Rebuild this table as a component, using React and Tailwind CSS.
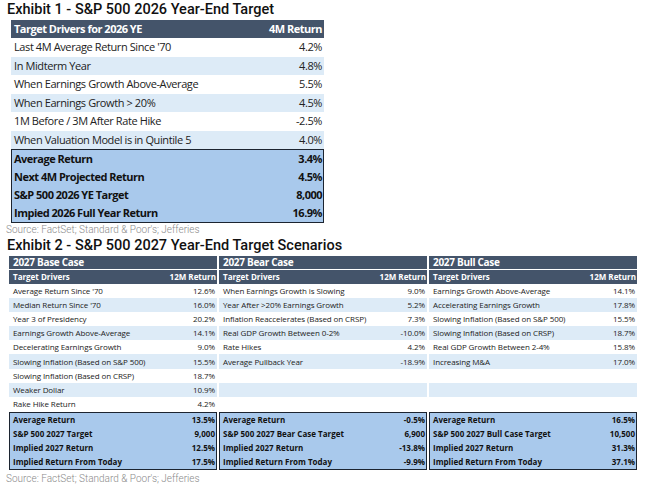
import React from 'react';

const ex1Rows = [
  ['Last 4M Average Return Since \'70', '4.2%'],
  ['In Midterm Year', '4.8%'],
  ['When Earnings Growth Above-Average', '5.5%'],
  ['When Earnings Growth > 20%', '4.5%'],
  ['1M Before / 3M After Rate Hike', '-2.5%'],
  ['When Valuation Model is in Quintile 5', '4.0%'],
];

const ex1Summary = [
  ['Average Return', '3.4%'],
  ['Next 4M Projected Return', '4.5%'],
  ['S&P 500 2026 YE Target', '8,000'],
  ['Impied 2026 Full Year Return', '16.9%'],
];

const scenarios = [
  {
    title: '2027 Base Case',
    rows: [
      ['Average Return Since \'70', '12.6%'],
      ['Median Return Since \'70', '16.0%'],
      ['Year 3 of Presidency', '20.2%'],
      ['Earnings Growth Above-Average', '14.1%'],
      ['Decelerating Earnings Growth', '9.0%'],
      ['Slowing Inflation (Based on S&P 500)', '15.5%'],
      ['Slowing Inflation (Based on CRSP)', '18.7%'],
      ['Weaker Dollar', '10.9%'],
      ['Rake Hike Return', '4.2%'],
    ],
    summary: [
      ['Average Return', '13.5%'],
      ['S&P 500 2027 Target', '9,000'],
      ['Implied 2027 Return', '12.5%'],
      ['Implied Return From Today', '17.5%'],
    ],
  },
  {
    title: '2027 Bear Case',
    rows: [
      ['When Earnings Growth is Slowing', '9.0%'],
      ['Year After >20% Earnings Growth', '5.2%'],
      ['Inflation Reaccelerates (Based on CRSP)', '7.3%'],
      ['Real GDP Growth Between 0-2%', '-10.0%'],
      ['Rate Hikes', '4.2%'],
      ['Average Pullback  Year', '-18.9%'],
      ['', ''],
      ['', ''],
      ['', ''],
    ],
    summary: [
      ['Average Return', '-0.5%'],
      ['S&P 500 2027 Bear Case Target', '6,900'],
      ['Implied 2027 Return', '-13.8%'],
      ['Implied Return From Today', '-9.9%'],
    ],
  },
  {
    title: '2027 Bull Case',
    rows: [
      ['Earnings Growth Above-Average', '14.1%'],
      ['Accelerating Earnings Growth', '17.8%'],
      ['Slowing Inflation (Based on S&P 500)', '15.5%'],
      ['Slowing Inflation (Based on CRSP)', '18.7%'],
      ['Real GDP Growth Between 2-4%', '15.8%'],
      ['Increasing M&A', '17.0%'],
      ['', ''],
      ['', ''],
      ['', ''],
    ],
    summary: [
      ['Average Return', '16.5%'],
      ['S&P 500 2027 Bull Case Target', '10,500'],
      ['Implied 2027 Return', '31.3%'],
      ['Implied Return From Today', '37.1%'],
    ],
  },
];

const cellFont = { fontFamily: '"Open Sans", "Noto Sans", sans-serif' };
const titleFont = { fontFamily: 'Roboto, sans-serif' };

// one of the three scenario blocks in exhibit 2
const ScenarioTable = ({ data }) => (
  <div className="w-[208px] flex flex-col">
    <div className="h-[13px] bg-[#44546a] text-white font-bold text-[10px] tracking-[-0.3px] leading-[13px] px-[4px]">{data.title}</div>
    <div className="h-px bg-white" />
    <div className="h-[14px] bg-[#44546a] text-white font-bold text-[8px] flex items-center justify-between pl-[4px] pr-[1px]">
      <span>Target Drivers</span>
      <span>12M Return</span>
    </div>
    {data.rows.map(([label, val], i) => (
      <div key={i} className={`h-[14.1px] flex items-center justify-between pl-[4px] pr-[2px] text-[8px] text-[#222] tracking-[-0.1px] ${i % 2 === 1 ? 'bg-[#ddebf7]' : 'bg-white'}`}>
        <span>{label}</span>
        <span>{val}</span>
      </div>
    ))}
    <div className="mt-[1px] border-[1.5px] border-[#1c2430] bg-[#a9c9ec]">
      {data.summary.map(([label, val], i) => (
        <div key={i} className="h-[14px] flex items-center justify-between pl-[3px] pr-[1px] text-[8px] font-bold text-[#111]">
          <span>{label}</span>
          <span>{val}</span>
        </div>
      ))}
    </div>
  </div>
);

const App = () => {
  return (
    <div className="w-[650px] h-[489px] bg-white overflow-hidden" style={cellFont}>
      <div className="h-[20px] pl-[7px] text-[14.5px] leading-[20px] font-medium text-[#111]" style={titleFont}>
        Exhibit 1 - S&amp;P 500 2026 Year-End Target
      </div>

      <div className="ml-[11px] w-[313px] flex flex-col">
        <div className="h-[18px] bg-[#44546a] text-white font-bold text-[11px] tracking-[-0.5px] flex items-center justify-between pl-[3px] pr-[2px]">
          <span>Target Drivers for 2026 YE</span>
          <span>4M Return</span>
        </div>
        {ex1Rows.map(([label, val], i) => (
          <div key={i} className={`h-[18.5px] flex items-center justify-between pl-[3px] pr-[2px] text-[11px] tracking-[-0.4px] text-[#222] ${i % 2 === 1 ? 'bg-[#ddebf7]' : 'bg-white'}`}>
            <span>{label}</span>
            <span>{val}</span>
          </div>
        ))}
        <div className="border-[1.5px] border-[#1c2430] bg-[#a9c9ec]">
          {ex1Summary.map(([label, val], i) => (
            <div key={i} className="h-[18px] flex items-center justify-between pl-[2px] pr-[1px] text-[11px] tracking-[-0.5px] font-bold text-[#111]">
              <span>{label}</span>
              <span>{val}</span>
            </div>
          ))}
        </div>
      </div>

      <div className="h-[13px] pl-[6px] text-[10px] leading-[13px] font-light text-[#8a8a8a]" style={titleFont}>
        Source: FactSet; Standard &amp; Poor's; Jefferies
      </div>

      <div className="h-[20px] pl-[7px] text-[14.5px] leading-[20px] font-medium text-[#111]" style={titleFont}>
        Exhibit 2 - S&amp;P 500 2027 Year-End Target Scenarios
      </div>

      <div className="ml-[9px] flex gap-[2px]">
        {scenarios.map((s) => (
          <ScenarioTable key={s.title} data={s} />
        ))}
      </div>

      <div className="mt-[2px] h-[13px] pl-[6px] text-[10px] leading-[13px] font-light text-[#8a8a8a]" style={titleFont}>
        Source: FactSet; Standard &amp; Poor's; Jefferies
      </div>
    </div>
  );
};

export default App;
